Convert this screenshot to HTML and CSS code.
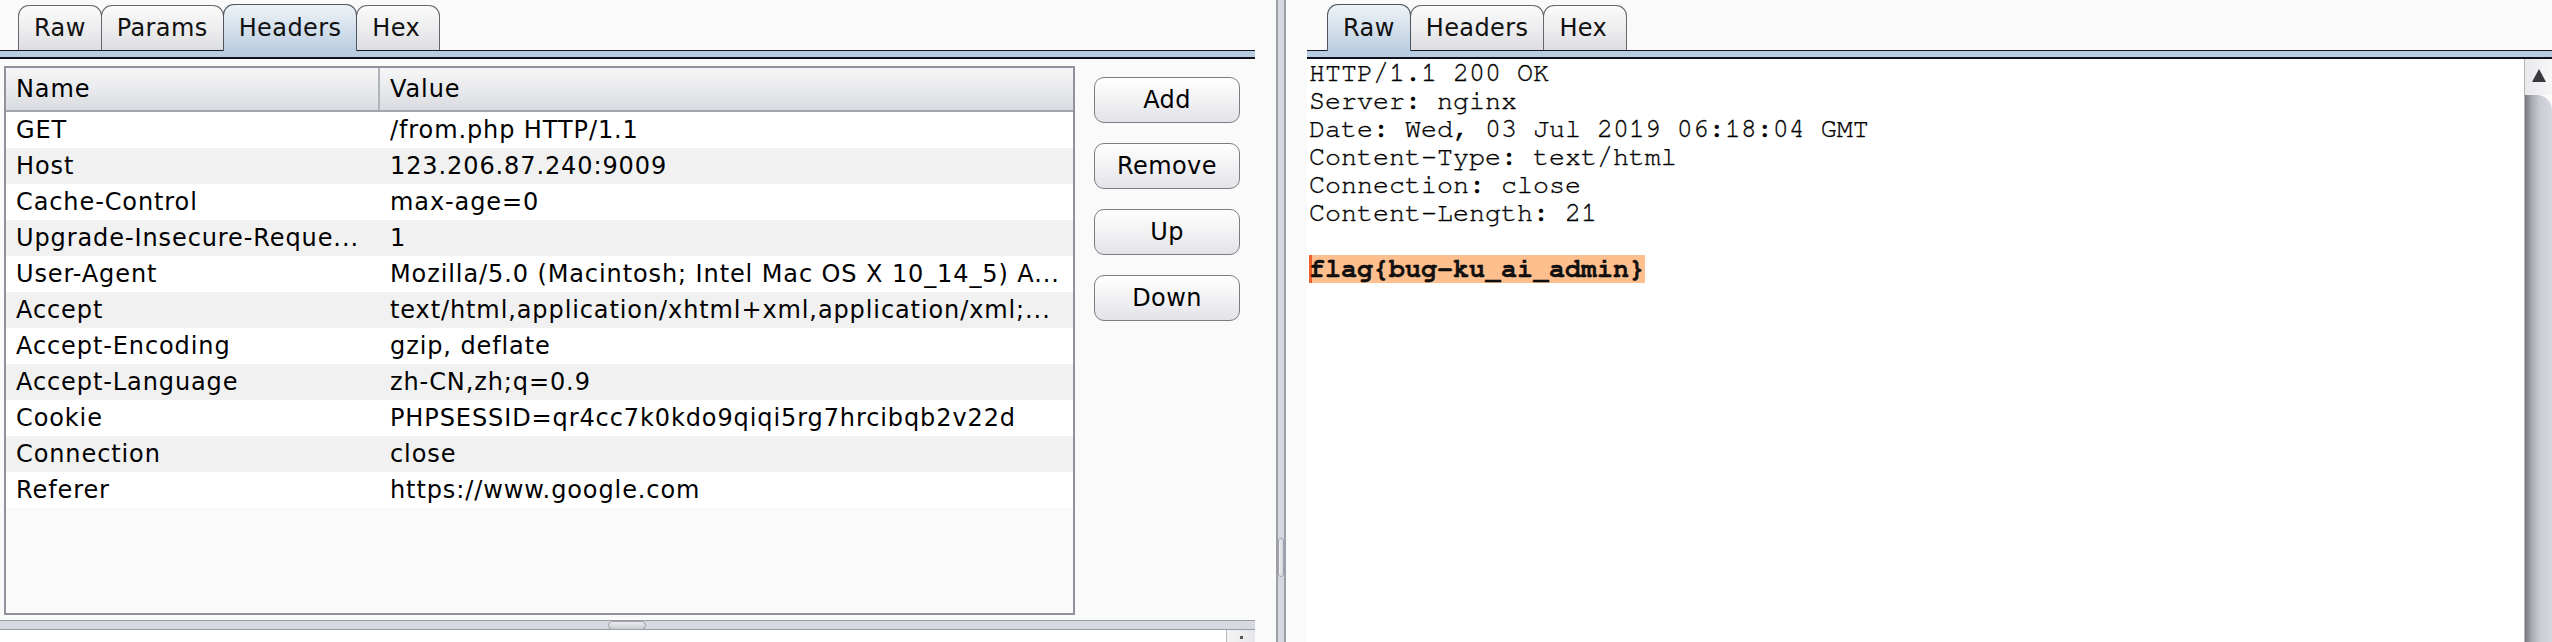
FILE: index.html
```html
<!DOCTYPE html>
<html>
<head>
<meta charset="utf-8">
<title>Repeater</title>
<link rel="stylesheet" href="styles.css">
</head>
<body>
<div class="app">
  <section class="pane pane-left">
    <div class="tabs">
      <div class="tab">Raw</div>
      <div class="tab">Params</div>
      <div class="tab active">Headers</div>
      <div class="tab">Hex</div>
    </div>
    <div class="band"></div>
    <div class="editor">
      <div class="table">
        <div class="thead">
          <div class="c1">Name</div>
          <div class="c2">Value</div>
        </div>
        <div class="tbody">
          <div class="row"><div class="c1">GET</div><div class="c2">/from.php HTTP/1.1</div></div>
          <div class="row"><div class="c1">Host</div><div class="c2">123.206.87.240:9009</div></div>
          <div class="row"><div class="c1">Cache-Control</div><div class="c2">max-age=0</div></div>
          <div class="row"><div class="c1">Upgrade-Insecure-Reque...</div><div class="c2">1</div></div>
          <div class="row"><div class="c1">User-Agent</div><div class="c2">Mozilla/5.0 (Macintosh; Intel Mac OS X 10_14_5) A...</div></div>
          <div class="row"><div class="c1">Accept</div><div class="c2">text/html,application/xhtml+xml,application/xml;...</div></div>
          <div class="row"><div class="c1">Accept-Encoding</div><div class="c2">gzip, deflate</div></div>
          <div class="row"><div class="c1">Accept-Language</div><div class="c2">zh-CN,zh;q=0.9</div></div>
          <div class="row"><div class="c1">Cookie</div><div class="c2">PHPSESSID=qr4cc7k0kdo9qiqi5rg7hrcibqb2v22d</div></div>
          <div class="row"><div class="c1">Connection</div><div class="c2">close</div></div>
          <div class="row"><div class="c1">Referer</div><div class="c2">https://www.google.com</div></div>
        </div>
      </div>
      <div class="buttons">
        <button class="btn">Add</button>
        <button class="btn">Remove</button>
        <button class="btn">Up</button>
        <button class="btn">Down</button>
      </div>
    </div>
    <div class="hbar"><div class="hgrip"></div></div>
    <div class="foot"><div class="corner"><span class="corner-tip"></span></div></div>
  </section>

  <div class="splitter"><div class="sgrip"></div></div>

  <section class="pane pane-right">
    <div class="tabs tabs-right">
      <div class="tab active">Raw</div>
      <div class="tab">Headers</div>
      <div class="tab">Hex</div>
    </div>
    <div class="band"></div>
    <div class="resp">
      <div class="text"><div class="line">HTTP/1.1 200 OK</div><div class="line">Server: nginx</div><div class="line">Date: Wed, 03 Jul 2019 06:18:04 GMT</div><div class="line">Content-Type: text/html</div><div class="line">Connection: close</div><div class="line">Content-Length: 21</div><div class="line"></div><div class="line"><span class="sel">flag{bug-ku_ai_admin}</span></div></div>
      <div class="vscroll">
        <div class="vup"><span class="arrow"></span></div>
        <div class="vthumb"></div>
      </div>
    </div>
  </section>
</div>
</body>
</html>
```

FILE: styles.css
```css
* { box-sizing: border-box; }

html, body {
  margin: 0;
  padding: 0;
  width: 2552px;
  height: 642px;
  overflow: hidden;
  background: #fafafa;
  font-family: "DejaVu Sans", "Liberation Sans", sans-serif;
  font-size: 24px;
  color: #111;
}

.app {
  display: flex;
  height: 642px;
}

.pane {
  display: flex;
  flex-direction: column;
  height: 642px;
}

.pane-left {
  width: 1255px;
  margin-right: 21px;
}

.pane-right {
  width: 1245px;
  margin-left: 21px;
}

/* tab strip */
.tabs {
  display: flex;
  align-items: flex-end;
  height: 51px;
  padding-left: 18px;
  border-bottom: 1px solid #161622;
}

.tabs-right {
  padding-left: 20px;
}

.tab {
  height: 45px;
  padding: 0 15px;
  display: flex;
  align-items: center;
  border: 1.5px solid #66666c;
  border-bottom: 0;
  border-radius: 11px 11px 0 0;
  background: linear-gradient(#fbfbfb, #ececee 55%, #dcdde1);
  margin-right: -1px;
  font-size: 24px;
  letter-spacing: 0.4px;
  color: #111;
}

.tab:last-child {
  padding-right: 19px;
}

.tab.active {
  height: 47px;
  margin-bottom: -1px;
  position: relative;
  z-index: 1;
  border-color: #4d5560;
  background: linear-gradient(#eef2f6, #d6e1ec 50%, #b9cde1);
}

.band {
  height: 8px;
  background: #b9cde1;
  border-bottom: 2px solid #10101a;
}

/* request editor */
.editor {
  display: flex;
  height: 561px;
}

.table {
  margin-top: 7px;
  margin-left: 4px;
  width: 1071px;
  height: 549px;
  border: 2px solid #8f929c;
  background: #fafafa;
  display: flex;
  flex-direction: column;
  letter-spacing: 0.9px;
  color: #000;
}

.thead {
  display: flex;
  height: 44px;
  background: linear-gradient(#f6f6f7, #e9eaed 50%, #dadbe0);
  border-bottom: 2px solid #a3a5ae;
}

.thead .c1 {
  width: 374px;
  border-right: 2px solid #b2b4bc;
}

.thead .c1,
.thead .c2 {
  display: flex;
  align-items: center;
  padding-left: 10px;
}

.row {
  display: flex;
  height: 36px;
  line-height: 36px;
  background: #ffffff;
}

.row:nth-child(even) {
  background: #f1f1f1;
}

.row .c1 {
  width: 374px;
  padding-left: 10px;
  white-space: nowrap;
  overflow: hidden;
}

.row .c2 {
  flex: 1;
  padding-left: 10px;
  white-space: nowrap;
  overflow: hidden;
}

.buttons {
  margin-left: 19px;
  margin-top: 18px;
  display: flex;
  flex-direction: column;
  gap: 20px;
}

.btn {
  width: 146px;
  height: 46px;
  border: 1.5px solid #7c7d84;
  border-radius: 10px;
  background: linear-gradient(#ffffff, #f2f2f4 50%, #e2e3e8);
  font-family: "DejaVu Sans", "Liberation Sans", sans-serif;
  font-size: 24px;
  letter-spacing: 0.4px;
  color: #000;
  padding: 0;
}

.hbar {
  height: 10px;
  background: #d6d9df;
  border-top: 1px solid #9a9da7;
  border-bottom: 1px solid #9a9da7;
  display: flex;
}

.hgrip {
  margin-left: 608px;
  width: 38px;
  height: 9px;
  border: 1px solid #9fa2ab;
  border-radius: 5px;
  background: linear-gradient(#eceef1, #c9ccd2);
}

.foot {
  height: 12px;
  background: #ffffff;
  display: flex;
  justify-content: flex-end;
}

.corner {
  width: 29px;
  height: 12px;
  border-left: 1px solid #b8b9bf;
  background: linear-gradient(90deg, #f4f4f5, #e6e7ea);
  display: flex;
  justify-content: center;
}

.corner-tip {
  width: 3px;
  height: 3px;
  margin-top: 6px;
  background: #555;
}

/* splitter */
.splitter {
  width: 10px;
  height: 642px;
  background: #d5d8de;
  border-left: 2px solid #9c9ea8;
  border-right: 2px solid #9c9ea8;
  display: flex;
  justify-content: center;
}

.sgrip {
  margin-top: 538px;
  width: 6px;
  height: 39px;
  border: 1px solid #a2a5ae;
  border-radius: 3px;
  background: linear-gradient(90deg, #eef0f2, #cfd2d8);
}

/* response */
.resp {
  display: flex;
  flex: 1;
}

.text {
  flex: 1;
  background: #ffffff;
  padding-left: 2px;
  font-family: "Nimbus Mono PS", "Nimbus Mono L", "FreeMono", "Courier New", Courier, "Liberation Mono", monospace;
  font-size: 26.667px;
  line-height: 28px;
  color: #000;
  -webkit-text-stroke: 0.35px #000;
  white-space: pre;
}

.line {
  height: 28px;
}

.sel {
  display: inline-block;
  height: 28px;
  vertical-align: top;
  font-weight: bold;
  color: #111;
  background: #fdbf8e;
  box-shadow: inset 3px 0 0 #f0602c;
}

.vscroll {
  width: 28px;
  display: flex;
  flex-direction: column;
  border-left: 1px solid #b4b6bc;
}

.vup {
  height: 36px;
  background: linear-gradient(90deg, #e9e9ec, #f7f7f8);
  display: flex;
  justify-content: center;
  padding-top: 10px;
}

.arrow {
  width: 0;
  height: 0;
  border-left: 7px solid transparent;
  border-right: 7px solid transparent;
  border-bottom: 13px solid #3a3a3e;
}

.vthumb {
  flex: 1;
  border-top-right-radius: 15px;
  background: linear-gradient(90deg, #75767c, #a9abb2 25%, #c8cbd1 55%, #d6d9df);
}
```
